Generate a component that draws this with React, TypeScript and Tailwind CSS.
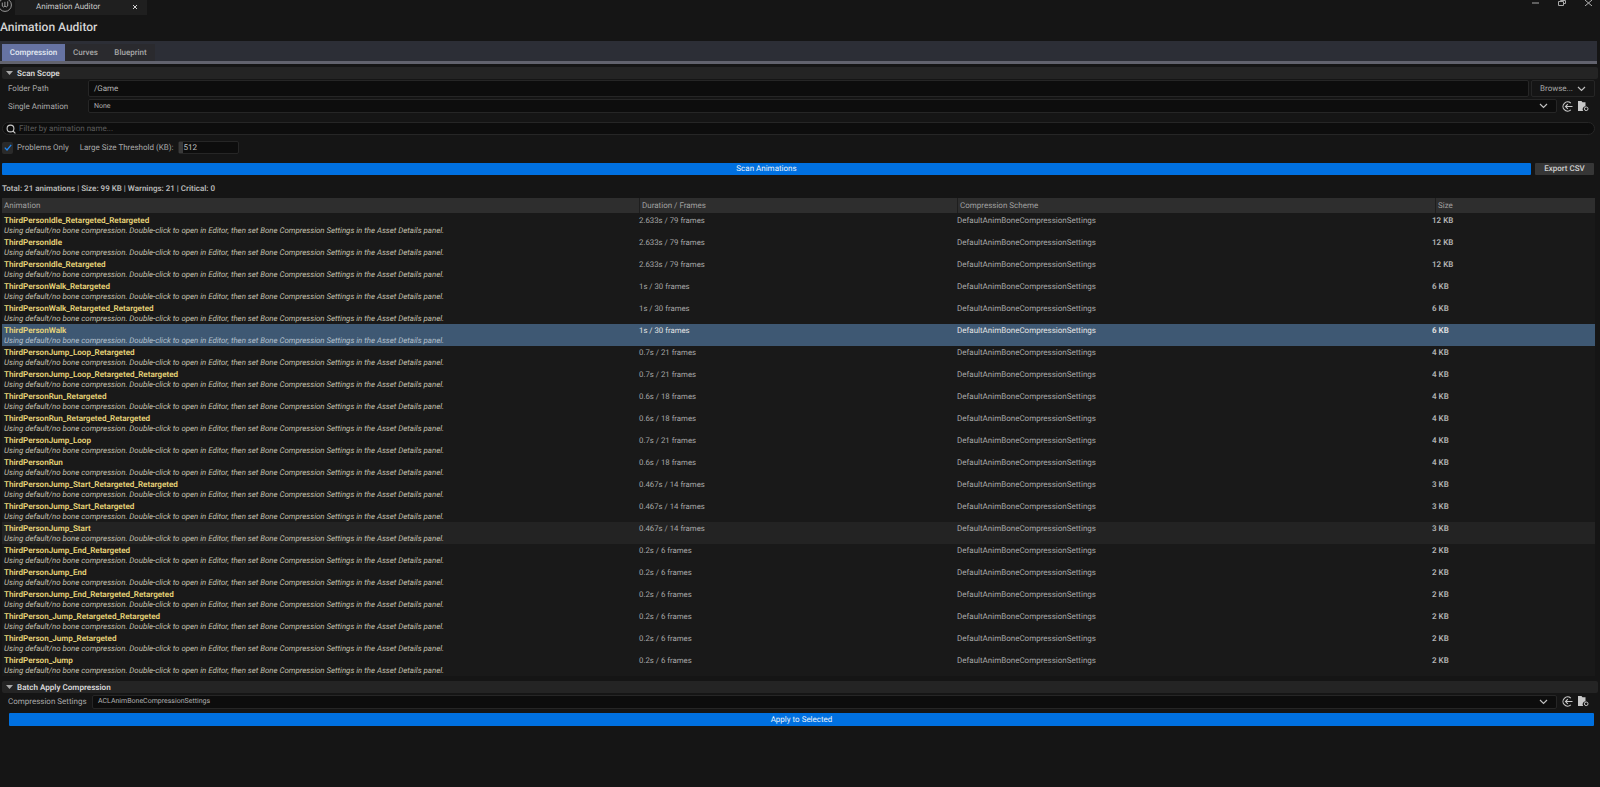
import React from 'react';

const hint = 'Using default/no bone compression. Double-click to open in Editor, then set Bone Compression Settings in the Asset Details panel.';
const scheme = 'DefaultAnimBoneCompressionSettings';

const rows = [
  { name: 'ThirdPersonIdle_Retargeted_Retargeted', duration: '2.633s / 79 frames', size: '12 KB' },
  { name: 'ThirdPersonIdle', duration: '2.633s / 79 frames', size: '12 KB' },
  { name: 'ThirdPersonIdle_Retargeted', duration: '2.633s / 79 frames', size: '12 KB' },
  { name: 'ThirdPersonWalk_Retargeted', duration: '1s / 30 frames', size: '6 KB' },
  { name: 'ThirdPersonWalk_Retargeted_Retargeted', duration: '1s / 30 frames', size: '6 KB' },
  { name: 'ThirdPersonWalk', duration: '1s / 30 frames', size: '6 KB', selected: true },
  { name: 'ThirdPersonJump_Loop_Retargeted', duration: '0.7s / 21 frames', size: '4 KB' },
  { name: 'ThirdPersonJump_Loop_Retargeted_Retargeted', duration: '0.7s / 21 frames', size: '4 KB' },
  { name: 'ThirdPersonRun_Retargeted', duration: '0.6s / 18 frames', size: '4 KB' },
  { name: 'ThirdPersonRun_Retargeted_Retargeted', duration: '0.6s / 18 frames', size: '4 KB' },
  { name: 'ThirdPersonJump_Loop', duration: '0.7s / 21 frames', size: '4 KB' },
  { name: 'ThirdPersonRun', duration: '0.6s / 18 frames', size: '4 KB' },
  { name: 'ThirdPersonJump_Start_Retargeted_Retargeted', duration: '0.467s / 14 frames', size: '3 KB' },
  { name: 'ThirdPersonJump_Start_Retargeted', duration: '0.467s / 14 frames', size: '3 KB' },
  { name: 'ThirdPersonJump_Start', duration: '0.467s / 14 frames', size: '3 KB', hovered: true },
  { name: 'ThirdPersonJump_End_Retargeted', duration: '0.2s / 6 frames', size: '2 KB' },
  { name: 'ThirdPersonJump_End', duration: '0.2s / 6 frames', size: '2 KB' },
  { name: 'ThirdPersonJump_End_Retargeted_Retargeted', duration: '0.2s / 6 frames', size: '2 KB' },
  { name: 'ThirdPerson_Jump_Retargeted_Retargeted', duration: '0.2s / 6 frames', size: '2 KB' },
  { name: 'ThirdPerson_Jump_Retargeted', duration: '0.2s / 6 frames', size: '2 KB' },
  { name: 'ThirdPerson_Jump', duration: '0.2s / 6 frames', size: '2 KB' },
];

const Chevron = () => (
  <svg width="9" height="6" viewBox="0 0 9 6" fill="none" stroke="#c0c0c0" strokeWidth="1.2">
    <path d="M1 1l3.5 3.5L8 1" />
  </svg>
);

const UseSelectedIcon = () => (
  <svg width="11" height="11" viewBox="0 0 11 11" fill="none" stroke="#c8c8c8" strokeWidth="1.1">
    <path d="M8.8 2.2A4.6 4.6 0 1 0 8.8 8.8" />
    <path d="M10.5 5.5H3.5M5.8 3.2L3.5 5.5l2.3 2.3" />
  </svg>
);

const BrowseIcon = () => (
  <svg width="11" height="11" viewBox="0 0 11 11">
    <path d="M0 0h3.5l1 1.2H7.5V5.2A3 3 0 0 0 5.2 10H0z" fill="#c8c8c8" />
    <circle cx="8.2" cy="7.8" r="1.8" fill="none" stroke="#c8c8c8" strokeWidth="1" />
  </svg>
);

const SectionHeader = ({ title }: { title: string }) => (
  <div className="mx-[2px] flex h-[12px] items-center rounded-[2px] bg-[#242424]">
    <svg width="7" height="4" viewBox="0 0 7 4" className="ml-[4px]">
      <path d="M0 0h7L3.5 4z" fill="#a8a8a8" />
    </svg>
    <span className="ml-[4px] text-[8.1px] font-semibold text-[#d8d8d8]">{title}</span>
  </div>
);

const AssetPicker = ({ label, value }: { label: string; value: string }) => (
  <div className="flex min-w-0 flex-1 items-center">
    <div className="flex h-[14px] min-w-0 flex-1 items-center rounded-[2px] border border-[#262626] bg-[#0d0d0d] pl-[5px] pr-[8px]" aria-label={label}>
      <span className="flex-1 text-[7px] text-[#b0b0b0]">{value}</span>
      <Chevron />
    </div>
    <div className="ml-[5px] flex w-[11px] justify-center"><UseSelectedIcon /></div>
    <div className="ml-[5px] mr-[11px] flex w-[11px] justify-center"><BrowseIcon /></div>
  </div>
);

const Row = ({ row }: { row: (typeof rows)[number] }) => {
  const bg = row.selected ? 'bg-[#3e5873]' : row.hovered ? 'bg-[#232323]' : '';
  const text = row.selected ? 'text-[#e4e4e4]' : 'text-[#a8a8a8]';
  return (
    <div className={`flex h-[22px] overflow-hidden ${bg}`}>
      <div className="w-[636px] pl-[2px]">
        <div className="pt-[1px] text-[8.1px] font-semibold leading-[11px] text-[#e9d67a]">{row.name}</div>
        <div className={`text-[7.87px] italic leading-[10px] ${row.selected ? 'text-[#b5c0cb]' : 'text-[#c4c0ae]'}`}>{hint}</div>
      </div>
      <div className={`w-[319px] pl-[1px] pt-[2px] text-[7.8px] leading-[10px] ${text}`}>{row.duration}</div>
      <div className={`w-[475px] pt-[2px] text-[8px] leading-[10px] ${text}`}>{scheme}</div>
      <div className={`pt-[1px] text-[8px] font-semibold leading-[11px] ${row.selected ? 'text-[#e4e4e4]' : 'text-[#b4b4b4]'}`}>{row.size}</div>
    </div>
  );
};

export default function App() {
  return (
    <div className="h-[787px] w-[1600px] overflow-hidden bg-[#151515] font-['Roboto',sans-serif] [text-rendering:geometricPrecision]">
      {/* title bar */}
      <div className="flex h-[16px] items-start">
        <svg width="14" height="14" viewBox="0 0 14 14" fill="none" stroke="#a8a8a8" strokeWidth="0.9" className="-ml-[2px] -mt-[2px] shrink-0">
          <circle cx="7" cy="7" r="6.4" />
          <path d="M4.3 4.6v3.6q1.3 1.6 2.6 0V3.8M6.9 8.2q1.6 1.4 2.8-.2V3.4" />
        </svg>
        <div className="ml-[3px] flex h-[15px] w-[132px] items-center bg-[#1f1f1f] pb-[1px] pl-[21px] text-[8px] text-[#c8c8c8]">
          <span className="flex-1">Animation Auditor</span>
          <svg width="6" height="6" viewBox="0 0 6 6" stroke="#d0d0d0" strokeWidth="1" className="mr-[9px]">
            <path d="M1 1l4 4M5 1L1 5" />
          </svg>
        </div>
        <div className="flex-1" />
        <svg width="7" height="4" viewBox="0 0 7 4" className="mr-[19px] mt-[1px]"><path d="M0 2h7" stroke="#a8a8a8" strokeWidth="1" /></svg>
        <svg width="8" height="6" viewBox="0 0 8 6" fill="none" stroke="#a8a8a8" strokeWidth="1" className="mr-[19px]"><path d="M.5 1.5h5v4h-5zM2.5 1.5V.5h5v3h-2" /></svg>
        <svg width="7" height="6" viewBox="0 0 7 6" stroke="#b0b0b0" strokeWidth="1" className="mr-[8px]"><path d="M0 0l7 6M7 0L0 6" /></svg>
      </div>

      <div className="flex h-[21px] items-center text-[12px] font-medium leading-none text-[#d4d4d4]">Animation Auditor</div>

      {/* tabs */}
      <div className="mr-[3px] mt-[4px] flex h-[20px] items-end bg-[#2c2e36] pl-[2px]">
        <div className="flex h-[17px] w-[63px] items-center justify-center bg-[#6673a3] text-[8px] font-semibold text-[#dfe3ee]">Compression</div>
        <div className="flex h-[17px] w-[41px] items-center justify-center bg-[#2a2a2e] text-[8px] font-medium text-[#a8a8a8]">Curves</div>
        <div className="flex h-[17px] w-[49px] items-center justify-center bg-[#2a2a2e] text-[8px] font-medium text-[#a8a8a8]">Blueprint</div>
      </div>
      <div className="mr-[3px] h-[3px] bg-[#62636e]" />

      <div className="mt-[3px]"><SectionHeader title="Scan Scope" /></div>

      <div className="mt-[1px] flex h-[17px] items-center pl-[8px]">
        <span className="w-[80px] pt-[1px] text-[8px] text-[#a8a8a8]">Folder Path</span>
        <div className="flex h-[17px] flex-1 items-center rounded-[2px] border border-[#262626] bg-[#0d0d0d] pl-[5px] text-[8px] text-[#b0b0b0]">/Game</div>
        <div className="ml-[2px] mr-[5px] flex h-[17px] w-[64px] items-center justify-center gap-[4px] rounded-[2px] border border-[#262626] text-[8px] text-[#a8a8a8]">
          Browse... <Chevron />
        </div>
      </div>
      <div className="mt-[2px] flex h-[14px] items-center pl-[8px]">
        <span className="w-[80px] pt-[1px] text-[8px] text-[#a8a8a8]">Single Animation</span>
        <AssetPicker label="Single Animation" value="None" />
      </div>

      <div className="ml-[2px] mr-[5px] mt-[9px] flex h-[13px] items-center rounded-[7px] border border-[#262626] bg-[#0d0d0d] pl-[3px]">
        <svg width="10" height="10" viewBox="0 0 10 10" fill="none" stroke="#c8c8c8" strokeWidth="1.1">
          <circle cx="4.5" cy="4.5" r="3.4" />
          <path d="M7 7l2.4 2.4" />
        </svg>
        <span className="ml-[3px] pt-[1px] text-[8px] text-[#5c5c5c]">Filter by animation name...</span>
      </div>

      <div className="mt-[6px] flex h-[13px] items-center pl-[2px]">
        <div className="flex h-[12px] w-[11px] items-center justify-center rounded-[2px] bg-[#2a2a2a]">
          <svg width="8" height="7" viewBox="0 0 8 7" fill="none" stroke="#1f86f0" strokeWidth="1.3">
            <path d="M.8 3.6l2.2 2.3L7.2.8" />
          </svg>
        </div>
        <span className="ml-[4px] pt-[1px] text-[8px] text-[#a8a8a8]">Problems Only</span>
        <span className="ml-[11px] pt-[1px] text-[8px] text-[#a8a8a8]">Large Size Threshold (KB):</span>
        <div className="ml-[5px] flex h-[13px] w-[61px] items-center rounded-[2px] border border-[#262626] bg-[#0d0d0d] text-[8px] text-[#c0c0c0]">
          <span className="h-full w-[4px] bg-[#3a3a3a]" />
          <span className="pt-[1px]">512</span>
        </div>
      </div>

      <div className="mt-[9px] flex h-[12px] pl-[2px] pr-[6px]">
        <div className="flex flex-1 items-center justify-center rounded-[1px] bg-[#0070e0] text-[8px] text-[#e8f0fa]">Scan Animations</div>
        <div className="ml-[4px] flex w-[59px] items-center justify-center rounded-[1px] bg-[#363636] text-[8px] font-medium text-[#d0d0d0]">Export CSV</div>
      </div>

      <div className="mt-[7px] flex h-[13px] items-center pl-[2px] text-[8px] font-semibold text-[#b8b8b8]">Total: 21 animations | Size: 99 KB | Warnings: 21 | Critical: 0</div>

      {/* table */}
      <div className="ml-[2px] mr-[5px] mt-[3px] bg-[#191919]">
        <div className="flex h-[15px] items-center bg-[#2e2e2e] text-[8px] text-[#a0a0a0]">
          <div className="w-[637px] pl-[2px] leading-[16px]">Animation</div>
          <div className="h-full w-[318px] border-l border-[#1e1e1e] pl-[2px] leading-[16px]">Duration / Frames</div>
          <div className="h-full w-[478px] border-l border-[#1e1e1e] pl-[2px] leading-[16px]">Compression Scheme</div>
          <div className="h-full flex-1 border-l border-[#1e1e1e] pl-[2px] leading-[16px]">Size</div>
        </div>
        <div className="pt-[1px]">
          {rows.map((row) => (
            <Row key={row.name} row={row} />
          ))}
        </div>
      </div>

      <div className="mt-[5px]"><SectionHeader title="Batch Apply Compression" /></div>

      <div className="mt-[2px] flex h-[13px] items-center pl-[8px]">
        <span className="w-[84px] text-[8px] text-[#a8a8a8]">Compression Settings</span>
        <AssetPicker label="Compression Settings" value="ACLAnimBoneCompressionSettings" />
      </div>

      <div className="ml-[9px] mr-[6px] mt-[5px] flex h-[13px] items-center justify-center rounded-[1px] bg-[#0070e0] text-[8px] text-[#e8f0fa]">Apply to Selected</div>
    </div>
  );
}
